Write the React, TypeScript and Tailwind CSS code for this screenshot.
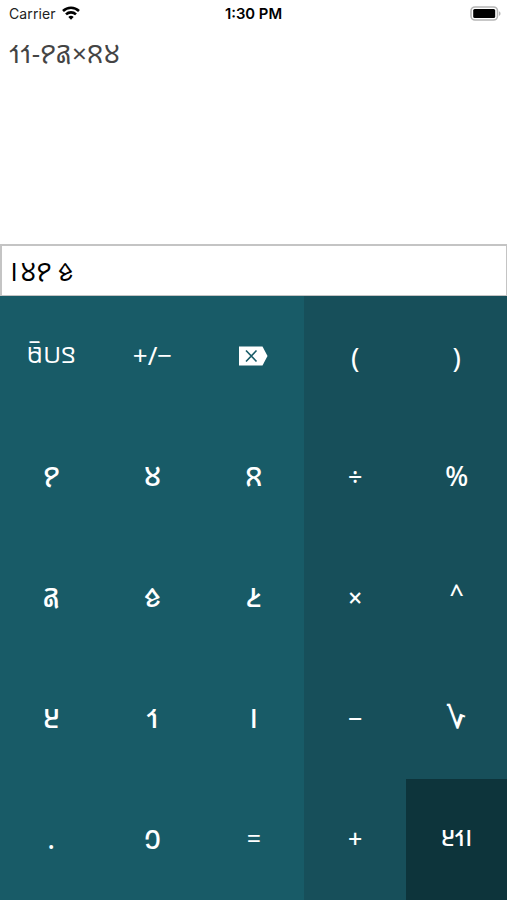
import { ReactNode } from "react";

type Key = { label: ReactNode; className?: string };

const mainKeys: Key[] = [
  { label: "𞤃\u200C𞤋\u200C𞤍𞥆", className: "text-[22.5px] pb-[2px]" },
  { label: "+/−", className: "text-[26px] pb-[2px]" },
  {
    label: (
      <svg className="h-[20px] w-[29px]" viewBox="0 0 29 20" fill="none">
        <path d="M0 0.5H23.5L28.5 10L23.5 19.5H0Z" fill="white" />
        <path d="M7 4.5L17.5 15.5M17.5 4.5L7 15.5" stroke="#185b67" strokeWidth="1.6" />
      </svg>
    ),
    className: "",
  },
  { label: "𞥙" },
  { label: "𞥘" },
  { label: "𞥗" },
  { label: "𞥖" },
  { label: "𞥕" },
  { label: "𞥔" },
  { label: "𞥓" },
  { label: "𞥒" },
  { label: "𞥑" },
  { label: "." },
  { label: "𞥐" },
  { label: "=", className: "text-[25px] pb-[2px]" },
];

const operatorKeys: Key[] = [
  { label: "(", className: "text-[28px] pt-[1px]" },
  { label: ")", className: "text-[28px] pt-[1px]" },
  { label: "÷", className: "text-[25px] font-medium pb-[2px]" },
  { label: "%", className: "text-[27px] font-medium pb-[3px]" },
  { label: "×", className: "text-[25px] font-medium pb-[1px]" },
  { label: "^", className: "text-[25px] font-medium pb-[8px]" },
  { label: "−", className: "text-[25px] font-medium pb-[1px]" },
  { label: <span className="inline-block -scale-x-100">√</span>, className: "text-[29px] font-semibold pb-[5px]" },
  { label: "+", className: "text-[25px] font-medium pb-[2px]" },
  { label: "𞥑𞥒𞥓", className: "bg-[#0d343b] text-[22.5px] font-medium pb-[2px]" },
];

function KeyButton({ label, className = "text-[27px] font-medium pb-[3px]" }: Key) {
  return <button className={`flex items-center justify-center pl-px leading-none ${className}`}>{label}</button>;
}

function StatusBar() {
  return (
    <div className="grid h-[28px] grid-cols-3 items-center pr-[6px] pl-[9px] font-['Inter',sans-serif] text-[14px] text-[#222]">
      <div className="-mt-px flex items-center gap-[6px]">
        <span className="tracking-[0.1px]">Carrier</span>
        <svg className="-mt-[2px] h-[14px] w-[18px]" viewBox="0 0 18 14" fill="none" stroke="black" strokeWidth="2.6">
          <path d="M1 5C5.5 0.7 12.5 0.7 17 5" />
          <path d="M4 8.4C6.8 5.7 11.2 5.7 14 8.4" />
          <path d="M6.3 10.9C8 9.5 10 9.5 11.7 10.9L9 13.7Z" fill="black" stroke="none" />
        </svg>
      </div>
      <div className="-ml-[3px] text-center text-[14.8px] font-semibold text-black">1:30 PM</div>
      <svg className="-mt-[2px] h-[15px] w-[31px] justify-self-end" viewBox="0 0 31 15">
        <rect x="1" y="1" width="26.5" height="13" rx="4" fill="white" stroke="#b5b5b5" strokeWidth="1.6" />
        <rect x="3.2" y="3" width="22" height="9" rx="1.5" fill="black" />
        <path d="M29 5.2V9.8C31 9 31 6 29 5.2Z" fill="#b5b5b5" />
      </svg>
    </div>
  );
}

export default function App() {
  return (
    <div className="flex h-[900px] w-[507px] flex-col overflow-hidden bg-white font-['Noto_Sans','Noto_Sans_Adlam','DejaVu_Sans',sans-serif]">
      <StatusBar />
      <div dir="rtl" className="h-[216px] px-[9px] pt-[12px] text-left text-[26px] leading-none text-[#444]">
        𞥘𞥗×𞥖𞥙-𞥒𞥒
      </div>
      <div className="flex h-[52px] items-center border-2 border-r border-b border-[#c4c4c4] px-[8px] pt-[2px] text-[25px] leading-none text-black">
        <span dir="rtl">
          𞥕 𞥙𞥘<span className="mr-[2px]">𞥑</span>
        </span>
      </div>
      <div className="flex h-[604px] text-white">
        <div className="grid w-[304px] grid-cols-3 grid-rows-5 bg-[#185b67]">
          {mainKeys.map((key, i) => (
            <KeyButton key={i} {...key} />
          ))}
        </div>
        <div className="grid w-[203px] grid-cols-2 grid-rows-5 bg-[#174f5a]">
          {operatorKeys.map((key, i) => (
            <KeyButton key={i} {...key} />
          ))}
        </div>
      </div>
    </div>
  );
}
